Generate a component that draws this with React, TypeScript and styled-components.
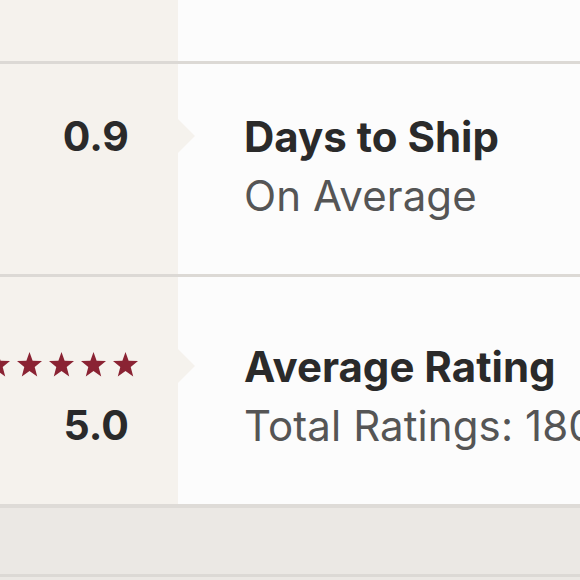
import styled, { createGlobalStyle } from "styled-components";

const GlobalStyle = createGlobalStyle`
  html, body {
    margin: 0;
    padding: 0;
    background: #ebe8e4;
    font-family: Inter, Lato, sans-serif;
    overflow: hidden;
  }
`;

const Page = styled.div`
  width: 580px;
  height: 580px;
  display: flex;
  flex-direction: column;
  background: #ebe8e4;
`;

const Card = styled.section`
  background: #fcfcfc;
  border-bottom: 4px solid #dedbd7;
`;

const Row = styled.div<{ $top: number }>`
  display: grid;
  grid-template-columns: 178px 1fr;
  border-top: ${(p) => (p.$top ? "3px solid #dcd9d5" : "none")};
`;

const LeftCell = styled.div<{ $arrow?: number }>`
  position: relative;
  background: #f5f2ed;
  padding-right: 49px;
  text-align: right;

  ${(p) =>
    p.$arrow !== undefined &&
    `
    &::after {
      content: "";
      position: absolute;
      right: -17px;
      top: ${p.$arrow}px;
      border-top: 17px solid transparent;
      border-bottom: 17px solid transparent;
      border-left: 17px solid #f5f2ed;
    }
  `}
`;

const RightCell = styled.div`
  padding-left: 66px;
  white-space: nowrap;
  overflow: hidden;
`;

const StatBody = styled.div<{ $padTop: number }>`
  padding-top: ${(p) => p.$padTop}px;
  padding-bottom: 49px;
`;

const Value = styled.div`
  font-size: 41px;
  line-height: 59px;
  font-weight: 700;
  color: #2a2a2a;
`;

const Title = styled.div`
  font-size: 42px;
  line-height: 59px;
  font-weight: 700;
  color: #2a2a2a;
`;

const Subtitle = styled.div`
  font-size: 42px;
  line-height: 59px;
  font-weight: 400;
  letter-spacing: 0.1px;
  color: #555555;
`;

const Stars = styled.div`
  height: 59px;
  display: flex;
  align-items: center;
  justify-content: flex-end;
  gap: 7px;
  margin-right: -9px;
  margin-top: -2px;
  margin-bottom: 2px;

  svg {
    flex-shrink: 0;
  }
`;

const Band = styled.div`
  height: 66px;
  background: #ebe8e4;
  border-bottom: 3px solid #dcd9d5;
`;

const Star = () => (
  <svg width="25" height="25" viewBox="0 0 24 24">
    <polygon
      fill="#8a2333"
      points="12,0 15,8.3 24,8.7 17,14.3 19.4,23.4 12,18.3 4.6,23.4 7,14.3 0,8.7 9,8.3"
    />
  </svg>
);

export default function App() {
  return (
    <>
      <GlobalStyle />
      <Page>
        <Card>
          <Row $top={0}>
            <LeftCell style={{ height: 61 }} />
            <RightCell />
          </Row>
          <Row $top={1}>
            <LeftCell $arrow={55}>
              <StatBody $padTop={43}>
                <Value>0.9</Value>
              </StatBody>
            </LeftCell>
            <RightCell>
              <StatBody $padTop={43}>
                <Title>Days to Ship</Title>
                <Subtitle>On Average</Subtitle>
              </StatBody>
            </RightCell>
          </Row>
          <Row $top={1}>
            <LeftCell $arrow={72}>
              <StatBody $padTop={60}>
                <Stars>
                  {Array.from({ length: 6 }).map((_, i) => (
                    <Star key={i} />
                  ))}
                </Stars>
                <Value>5.0</Value>
              </StatBody>
            </LeftCell>
            <RightCell>
              <StatBody $padTop={60}>
                <Title>Average Rating</Title>
                <Subtitle>Total Ratings: 180</Subtitle>
              </StatBody>
            </RightCell>
          </Row>
        </Card>
        <Band />
      </Page>
    </>
  );
}
